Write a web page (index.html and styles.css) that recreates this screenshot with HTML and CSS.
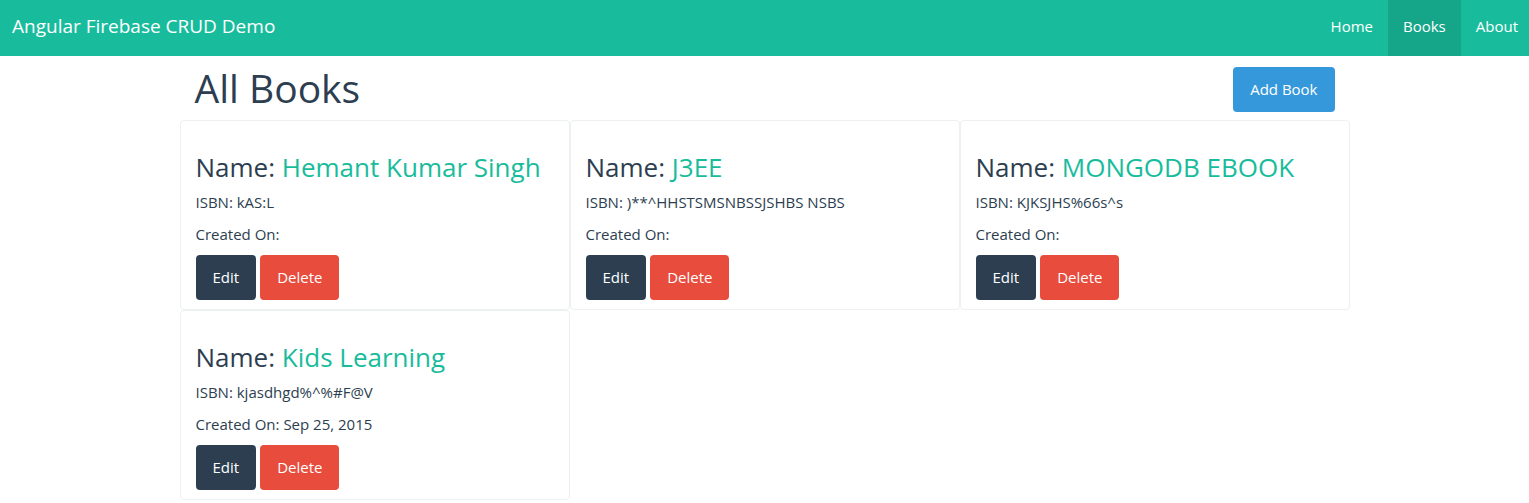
FILE: index.html
```html
<!DOCTYPE html>
<html>
<head>
<meta charset="utf-8">
<link rel="stylesheet" href="styles.css">
</head>
<body>
<nav class="navbar">
  <a class="brand">Angular Firebase CRUD Demo</a>
  <ul class="nav">
    <li><a>Home</a></li>
    <li class="active"><a>Books</a></li>
    <li><a>About</a></li>
  </ul>
</nav>
<main class="container">
  <div class="page-head">
    <h1>All Books</h1>
    <button class="btn btn-info">Add Book</button>
  </div>
  <div class="grid">
    <div class="card">
      <h3>Name: <span class="name">Hemant Kumar Singh</span></h3>
      <p>ISBN: kAS:L</p>
      <p>Created On:</p>
      <div class="actions"><button class="btn btn-primary">Edit</button><button class="btn btn-danger">Delete</button></div>
    </div>
    <div class="card">
      <h3>Name: <span class="name">J3EE</span></h3>
      <p>ISBN: )**^HHSTSMSNBSSJSHBS NSBS</p>
      <p>Created On:</p>
      <div class="actions"><button class="btn btn-primary">Edit</button><button class="btn btn-danger">Delete</button></div>
    </div>
    <div class="card">
      <h3>Name: <span class="name">MONGODB EBOOK</span></h3>
      <p>ISBN: KJKSJHS%66s^s</p>
      <p>Created On:</p>
      <div class="actions"><button class="btn btn-primary">Edit</button><button class="btn btn-danger">Delete</button></div>
    </div>
    <div class="card">
      <h3>Name: <span class="name">Kids Learning</span></h3>
      <p>ISBN: kjasdhgd%^%#F@V</p>
      <p>Created On: Sep 25, 2015</p>
      <div class="actions"><button class="btn btn-primary">Edit</button><button class="btn btn-danger">Delete</button></div>
    </div>
  </div>
</main>
</body>
</html>
```

FILE: styles.css
```css
* { box-sizing: border-box; }
html, body { margin: 0; padding: 0; }
body {
  font-family: "Open Sans", "Noto Sans", "Liberation Sans", sans-serif;
  font-size: 15px;
  line-height: 1.42857;
  color: #2c3e50;
  background: #fff;
}
.navbar {
  display: flex;
  justify-content: space-between;
  align-items: stretch;
  height: 56px;
  background: #18bc9c;
  padding: 0 0 0 12px;
}
.brand {
  display: flex;
  align-items: center;
  color: #fff;
  font-size: 19px;
  padding-bottom: 3px;
}
.nav {
  display: flex;
  list-style: none;
  margin: 0;
  padding: 0;
}
.nav li {
  display: flex;
}
.nav li a {
  display: flex;
  align-items: center;
  padding: 0 15px 2px;
  color: #fff;
  font-size: 15px;
}
.nav li:last-child a { padding-right: 11px; }
.nav li.active a { background: #15a589; }
.container {
  width: 1170px;
  margin: 0 auto;
}
.page-head {
  display: flex;
  justify-content: space-between;
  align-items: flex-start;
  padding: 11px 15px 0;
  height: 64px;
}
.page-head h1 {
  margin: 0;
  font-size: 39px;
  font-weight: 400;
  line-height: 1.1;
}
.btn {
  font-family: inherit;
  font-size: 15px;
  line-height: 21px;
  padding: 10px 15px;
  border: 2px solid transparent;
  border-radius: 4px;
  color: #fff;
  cursor: pointer;
  height: 45px;
}
.btn-info { background: #3498db; border-color: #3498db; }
.btn-primary { background: #2c3e50; border-color: #2c3e50; }
.btn-danger { background: #e74c3c; border-color: #e74c3c; }
.grid {
  display: grid;
  grid-template-columns: repeat(3, 390px);
}
.card {
  border: 1px solid #ecf0f1;
  border-radius: 4px;
  padding: 12px 15px 9px;
  height: 190px;
}
.card h3 {
  margin: 20px 0 10px;
  font-size: 26px;
  font-weight: 400;
  line-height: 1.1;
}
.card .name { color: #18bc9c; }
.card p {
  margin: 0 0 10.5px;
  line-height: 21.4px;
}
.actions {
  display: flex;
  gap: 4px;
}
```
